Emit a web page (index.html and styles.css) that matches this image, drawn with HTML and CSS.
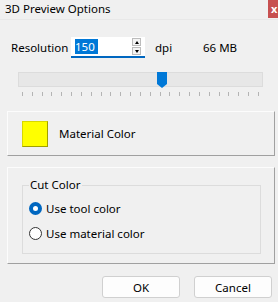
FILE: index.html
```html
<!DOCTYPE html>
<html>
  <head>
    <meta charset="UTF-8" />
    <title>3D Preview Options</title>
    <link rel="stylesheet" href="styles.css">
  </head>
  <body>
    <div class="dialog">
      <div class="titlebar">
        <span class="title">3D Preview Options</span>
        <span class="close">x</span>
      </div>

      <div class="res-row">
        <span class="res-label">Resolution</span>
        <div class="spin">
          <span class="spin-text">150</span>
          <div class="spin-arrows">
            <span class="arrow up"></span>
            <span class="arrow down"></span>
          </div>
        </div>
        <span class="unit">dpi</span>
        <span class="size">66 MB</span>
      </div>

      <div class="slider">
        <div class="track">
          <span class="thumb"></span>
        </div>
        <div class="ticks">
          <i></i><i></i><i></i><i></i><i></i><i></i><i></i><i></i><i></i><i></i>
          <i></i><i></i><i></i><i></i><i></i><i></i><i></i><i></i><i></i><i></i>
          <i></i><i></i><i></i><i></i><i></i>
        </div>
      </div>

      <button class="color-btn">
        <span class="swatch"></span>
        <span>Material Color</span>
      </button>

      <div class="panel">
        <div class="group">
          <span class="legend">Cut Color</span>
          <label class="radio"><span class="dot checked"></span>Use tool color</label>
          <label class="radio"><span class="dot"></span>Use material color</label>
        </div>
      </div>

      <div class="actions">
        <button class="btn">OK</button>
        <button class="btn">Cancel</button>
      </div>
    </div>
  </body>
</html>
```

FILE: styles.css
```css
body {
  margin: 0;
  background: #f0f0f0;
  font-family: "Noto Sans", "Open Sans", sans-serif;
  font-size: 11.5px;
  color: #000;
}

.dialog {
  width: 278px;
  height: 302px;
  overflow: hidden;
  display: flex;
  flex-direction: column;
}

.titlebar {
  height: 19px;
  display: flex;
  justify-content: space-between;
  align-items: flex-start;
  padding-left: 5px;
  border-bottom: 1px solid #e8e8e8;
}
.title {
  line-height: 17px;
}
.close {
  width: 10px;
  height: 18px;
  background: #c75050;
  color: #fff;
  font-weight: bold;
  font-size: 11px;
  line-height: 18px;
  padding-left: 3px;
  box-sizing: border-box;
  overflow: hidden;
}

.res-row {
  margin-top: 17px;
  height: 21px;
  display: flex;
  align-items: center;
  padding-left: 11px;
}
.res-label {
  width: 60px;
}
.spin {
  width: 74px;
  height: 21px;
  box-sizing: border-box;
  background: #fff;
  border-bottom: 2px solid #0067c0;
  display: flex;
  align-items: center;
  justify-content: space-between;
  padding: 0 4px 0 4px;
}
.spin-text {
  background: #0078d7;
  color: #fff;
  line-height: 15px;
  padding-right: 3px;
}
.spin-arrows {
  display: flex;
  flex-direction: column;
  gap: 1px;
}
.arrow {
  width: 9px;
  height: 8px;
  box-sizing: border-box;
  border: 1px solid #bcbcbc;
  background: #f4f4f4;
  position: relative;
}
.arrow::after {
  content: "";
  position: absolute;
  left: 1.5px;
  border-left: 2.5px solid transparent;
  border-right: 2.5px solid transparent;
}
.up::after {
  top: 1.5px;
  border-bottom: 3px solid #000;
}
.down::after {
  top: 1.5px;
  border-top: 3px solid #000;
}
.unit {
  margin-left: 10px;
  width: 48px;
}

.slider {
  margin: 14px 0 0 18px;
  width: 245px;
}
.track {
  height: 15px;
  box-sizing: border-box;
  background: #e7e7e7;
  border: 1px solid #dcdcdc;
  position: relative;
}
.thumb {
  position: absolute;
  left: 138px;
  top: -1px;
  width: 10px;
  height: 16px;
  background: #0078d7;
  clip-path: polygon(0 0, 100% 0, 100% 75%, 50% 100%, 0 75%);
}
.ticks {
  display: flex;
  justify-content: space-between;
  margin: 5px 4px 0 4px;
}
.ticks i {
  width: 1px;
  height: 4px;
  background: #b4b4b4;
}

.color-btn {
  margin: 15px 0 0 7px;
  width: 268px;
  height: 45px;
  font: inherit;
  background: #f0f0f0;
  border: 1px solid;
  border-color: #fcfcfc #a0a0a0 #a0a0a0 #fcfcfc;
  display: flex;
  align-items: center;
  padding: 0 0 0 14px;
  gap: 11px;
}
.swatch {
  width: 24px;
  height: 24px;
  background: #ffff00;
  border: 1px solid #d8d800;
  border-right-color: #a0a000;
  border-bottom-color: #a0a000;
}

.panel {
  margin: 11px 0 0 7px;
  width: 268px;
  height: 97px;
  box-sizing: border-box;
  border: 1px solid;
  border-color: #fcfcfc #a0a0a0 #a0a0a0 #fcfcfc;
  padding: 17px 0 0 14px;
}
.group {
  width: 239px;
  height: 69px;
  box-sizing: border-box;
  border: 1px solid #dcdcdc;
  position: relative;
  padding: 14px 0 0 6px;
  display: flex;
  flex-direction: column;
  gap: 9px;
}
.legend {
  position: absolute;
  top: -9px;
  left: 6px;
  padding: 0 2px 0 1px;
  background: #f0f0f0;
}
.radio {
  display: flex;
  align-items: center;
  gap: 4px;
  height: 16px;
}
.dot {
  width: 13px;
  height: 13px;
  box-sizing: border-box;
  border-radius: 50%;
  border: 1px solid #333;
  background: #fff;
}
.dot.checked {
  border: 4px solid #0067c0;
}

.actions {
  margin-top: 12px;
  display: flex;
  justify-content: flex-end;
  gap: 14px;
  padding-right: 6px;
}
.btn {
  width: 78px;
  height: 22px;
  font: inherit;
  background: #fdfdfd;
  border: 1px solid #d0d0d0;
  border-radius: 3px;
  padding: 0;
}
```
